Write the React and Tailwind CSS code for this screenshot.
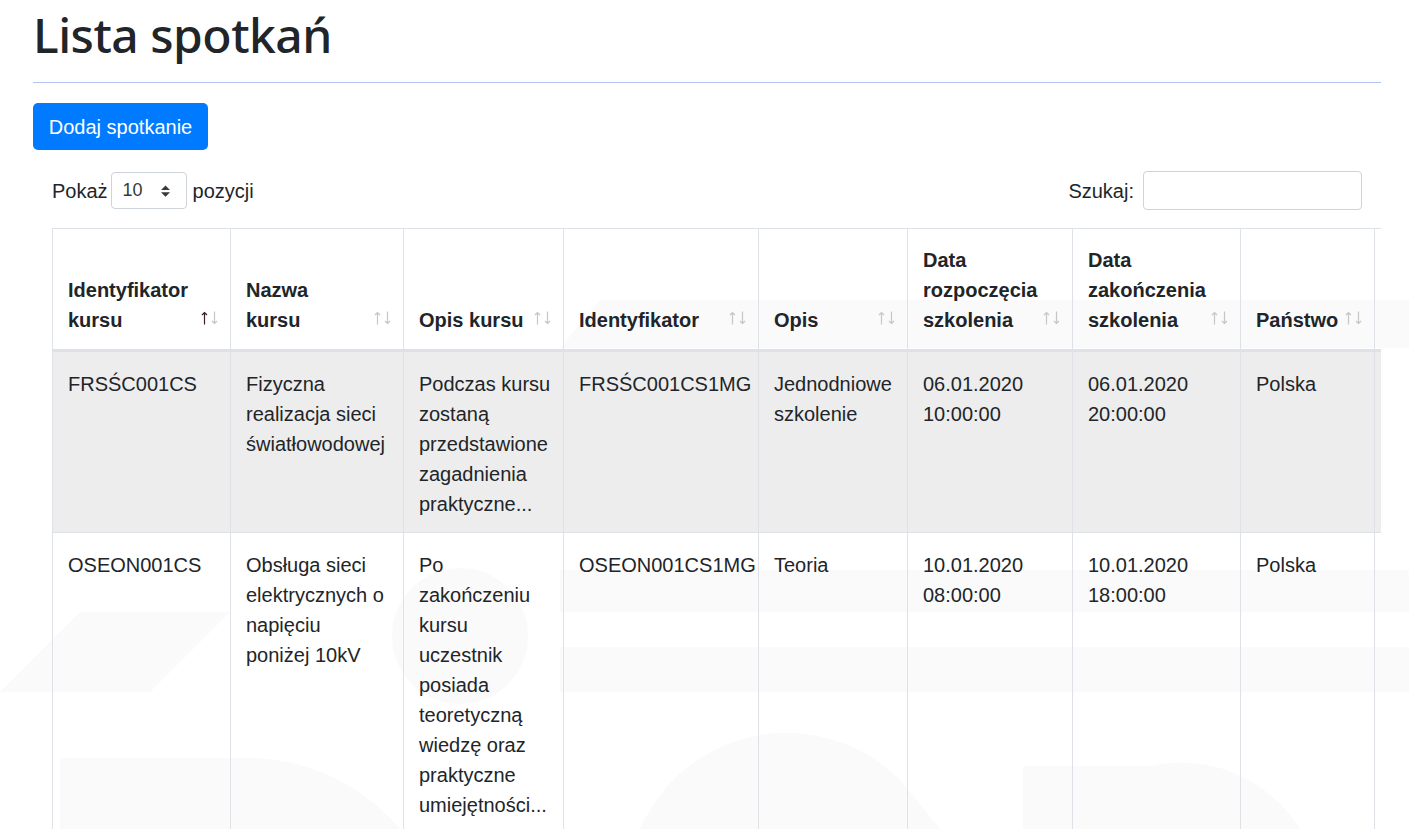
import React from 'react';

const headers = [
  { lines: ['Identyfikator', 'kursu'], active: true },
  { lines: ['Nazwa', 'kursu'] },
  { lines: ['Opis kursu'] },
  { lines: ['Identyfikator'] },
  { lines: ['Opis'] },
  { lines: ['Data', 'rozpoczęcia', 'szkolenia'] },
  { lines: ['Data', 'zakończenia', 'szkolenia'] },
  { lines: ['Państwo'] },
  { lines: [''], hidden: true },
];

const meetings = [
  [
    ['FRSŚC001CS'],
    ['Fizyczna', 'realizacja sieci', 'światłowodowej'],
    ['Podczas kursu', 'zostaną', 'przedstawione', 'zagadnienia', 'praktyczne...'],
    ['FRSŚC001CS1MG'],
    ['Jednodniowe', 'szkolenie'],
    ['06.01.2020', '10:00:00'],
    ['06.01.2020', '20:00:00'],
    ['Polska'],
    [''],
  ],
  [
    ['OSEON001CS'],
    ['Obsługa sieci', 'elektrycznych o', 'napięciu', 'poniżej 10kV'],
    ['Po', 'zakończeniu', 'kursu', 'uczestnik', 'posiada', 'teoretyczną', 'wiedzę oraz', 'praktyczne', 'umiejętności...'],
    ['OSEON001CS1MG'],
    ['Teoria'],
    ['10.01.2020', '08:00:00'],
    ['10.01.2020', '18:00:00'],
    ['Polska'],
    [''],
  ],
];

const SortIcon = ({ active }) => (
  <span className="absolute right-[12px] bottom-[24px] flex gap-[3px]">
    <svg width="7" height="14" viewBox="0 0 7 14">
      <path d="M3.5 13.5V1.5M1 4l2.5-2.5L6 4" fill="none" stroke={active ? '#3a1e22' : '#c4c6c8'} strokeWidth="1.2" />
    </svg>
    <svg width="7" height="14" viewBox="0 0 7 14">
      <path d="M3.5 0.5v12M1 10l2.5 2.5L6 10" fill="none" stroke="#c4c6c8" strokeWidth="1.2" />
    </svg>
  </span>
);

// faint background watermark
const Watermark = () => (
  <svg className="absolute top-0 left-0" width="1409" height="829" viewBox="0 0 1409 829">
    <g fill="#fafafa">
      <polygon points="600,300 1409,300 1409,348 560,348" />
      <rect x="560" y="570" width="849" height="42" />
      <rect x="560" y="647" width="849" height="45" />
      <polygon points="0,692 80,612 230,612 150,692" />
      <circle cx="460" cy="636" r="68" />
      <path d="M60 829 V758 H240 A200 200 0 0 1 400 829 Z" />
      <path d="M640 829 A160 160 0 0 1 900 780 L940 829 Z" />
      <path d="M1023 829 V766 H1150 A140 140 0 0 1 1300 829 Z" />
    </g>
  </svg>
);

const App = () => {
  return (
    <div className="relative min-h-[829px] overflow-hidden bg-white text-[#212529] font-['Liberation_Sans',Arial,sans-serif]">
      <Watermark />
      <div className="relative pt-[5px] pl-[33px] pr-[28px]">
        <h1 className="text-[48px] leading-[60px] font-medium font-['Noto_Sans',sans-serif] tracking-[-0.5px]">Lista spotkań</h1>
        <hr className="mt-[17px] border-0 border-t border-[#b4c4f0]" />
        <button className="mt-[20px] h-[47px] w-[175px] rounded-[5px] bg-[#007bff] text-[20px] text-white">
          Dodaj spotkanie
        </button>

        <div className="pl-[19px]">
          <div className="mt-[21px] mr-[19px] flex h-[39px] items-center justify-between text-[20px]">
            <div className="flex items-center">
              <span>Pokaż</span>
              <div className="ml-[3px] mr-[6px] flex h-[37px] w-[76px] items-center justify-between rounded-[4px] border border-[#ced4da] bg-white pl-[11px] pr-[16px] text-[18px] text-[#343a40]">
                <span>10</span>
                <svg width="9" height="12" viewBox="0 0 4 5">
                  <path d="M2 0L0 2h4zm0 5L0 3h4z" fill="#343a40" />
                </svg>
              </div>
              <span>pozycji</span>
            </div>
            <div className="flex items-center">
              <span>Szukaj:</span>
              <div className="ml-[9px] h-[39px] w-[219px] rounded-[4px] border border-[#ced4da] bg-white" />
            </div>
          </div>

          <div className="mt-[18px] overflow-hidden">
            <table className="w-[1482px] table-fixed border-collapse">
              <colgroup>
                <col className="w-[178px]" />
                <col className="w-[173px]" />
                <col className="w-[160px]" />
                <col className="w-[195px]" />
                <col className="w-[149px]" />
                <col className="w-[165px]" />
                <col className="w-[168px]" />
                <col className="w-[134px]" />
                <col className="w-[160px]" />
              </colgroup>
              <thead>
                <tr>
                  {headers.map((h, i) => (
                    <th
                      key={i}
                      className="relative border border-b-[3px] border-[#dee2e6] pt-[16px] pb-[14px] pl-[15px] pr-[38px] text-left align-bottom text-[20px] leading-[30px] font-bold"
                    >
                      {h.lines.map((line, j) => (
                        <div key={j} className="whitespace-nowrap">{line}</div>
                      ))}
                      {!h.hidden && <SortIcon active={h.active} />}
                    </th>
                  ))}
                </tr>
              </thead>
              <tbody>
                {meetings.map((row, r) => (
                  <tr key={r} className={r === 0 ? 'bg-[#000000]/[0.07]' : ''}>
                    {row.map((cell, c) => (
                      <td
                        key={c}
                        className="border border-[#dee2e6] px-[15px] pt-[17px] pb-[13px] align-top text-[20px] leading-[30px]"
                      >
                        {cell.map((line, j) => (
                          <div key={j} className="whitespace-nowrap">{line}</div>
                        ))}
                      </td>
                    ))}
                  </tr>
                ))}
              </tbody>
            </table>
          </div>
        </div>
      </div>
    </div>
  );
};

export default App;
